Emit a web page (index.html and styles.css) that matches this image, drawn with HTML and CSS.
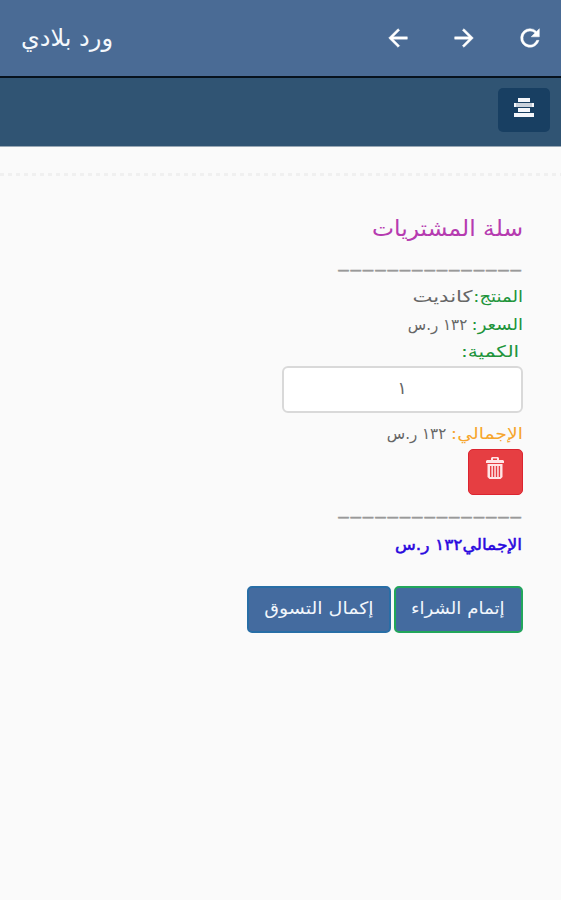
FILE: index.html
```html
<!DOCTYPE html>
<html lang="ar" dir="rtl">
<head>
<meta charset="utf-8">
<title>ورد بلادي</title>
<link rel="stylesheet" href="styles.css">
</head>
<body>
<header class="appbar">
  <div class="actions">
    <svg class="icon" viewBox="0 0 24 24"><path d="M17.65 6.35A7.96 7.96 0 0 0 12 4a8 8 0 1 0 7.73 10h-2.08A6 6 0 1 1 12 6c1.66 0 3.14.69 4.22 1.78L13 11h7V4z"/></svg>
    <svg class="icon" viewBox="0 0 24 24"><path d="M12 4l-1.41 1.41L16.17 11H4v2h12.17l-5.58 5.59L12 20l8-8z"/></svg>
    <svg class="icon" viewBox="0 0 24 24"><path d="M20 11H7.83l5.59-5.59L12 4l-8 8 8 8 1.41-1.41L7.83 13H20z"/></svg>
  </div>
  <h1 class="brand">ورد بلادي</h1>
</header>
<nav class="navbar">
  <button class="menu" aria-label="القائمة"><svg viewBox="0 0 20 20"><path d="M4 0h12v4H4zM0 5h20v4H0zM4 10h12v4H4zM0 15h20v4H0z"/><path class="shade" d="M2 5h16v4H2z"/></svg></button>
</nav>
<div class="divider"></div>
<main class="cart">
  <h2 class="title"><span>سلة المشتريات</span></h2>
  <div class="rule">_______________</div>
  <p class="line product"><b>المنتج:</b><span>كانديت</span></p>
  <p class="line price"><b>السعر:</b> <span>١٣٢ ر.س</span></p>
  <p class="line qty"><b>الكمية:</b></p>
  <div class="field">١</div>
  <p class="line subtotal"><b>الإجمالي:</b> <span>١٣٢ ر.س</span></p>
  <button class="trash" aria-label="حذف"><svg viewBox="0 0 18 22"><path fill-rule="evenodd" d="M6 0h6l1 1v2h4l1 1v2H0V4l1-1h4V1zM7 1.5V3h4V1.5zM1.5 7h15v13l-2 2h-11l-2-2zM4 9v11h1.4V9zm2.9 0v11h1.4V9zm2.9 0v11h1.4V9zm2.9 0v11h1.4V9z"/></svg></button>
  <div class="rule second">_______________</div>
  <p class="line total"><span>الإجمالي١٣٢ ر.س</span></p>
  <div class="buttons">
    <button class="btn checkout"><span>إتمام الشراء</span></button>
    <button class="btn shop"><span>إكمال التسوق</span></button>
  </div>
</main>
</body>
</html>
```
FILE: styles.css
```css
* { box-sizing: border-box; }
body { margin: 0; height: 900px; background: #fafafa; color: #666; font-family: "DejaVu Sans", sans-serif; }
h1, h2, p { margin: 0; font-weight: 400; }
button { border: 0; padding: 0; font-family: inherit; }
.appbar { height: 78px; display: flex; justify-content: space-between; align-items: center; padding: 0 17px 1px 21px; background: #4a6b95; border-bottom: 2px solid #07121d; }
.actions { display: flex; gap: 38px; }
.icon { width: 28px; height: 28px; fill: #fff; stroke: #fff; stroke-width: .4; }
.brand { color: #f4f8fc; font-size: 24px; line-height: 40px; white-space: nowrap; }
.navbar { height: 69px; padding: 10px 11px 0; background: #305473; border-bottom: 1px solid #99a8b5; }
.menu { display: flex; justify-content: center; width: 52px; height: 44px; padding-top: 10px; border-radius: 5px; background: #183f62; }
.menu svg { width: 20px; height: 20px; fill: #f4f6fa; }
.menu .shade { fill: #c9d1db; }
.divider { height: 3px; margin-top: 26px; background: repeating-linear-gradient(90deg, #f0f0f0 0 4px, #fafafa 4px 8px); }
.cart { padding: 36px 38.5px 0 0; }
.title { height: 34px; line-height: 34px; font-size: 22px; color: #b63bb0; }
.rule { height: 37px; width: 184px; font: 18px/30px "Liberation Sans", sans-serif; letter-spacing: 2.3px; color: #999; -webkit-text-stroke: .5px #999; direction: ltr; white-space: nowrap; }
.line { display: flex; gap: 4px; height: 27.5px; line-height: 27.5px; font-size: 16px; white-space: nowrap; }
.line b { font-weight: 400; color: #20943a; }
.line span, .line b, .title span, .btn span { display: inline-block; transform-origin: right center; }
.product { gap: 0; }
.product b { width: 50px; transform: scaleX(1.13); }
.product span { transform: scaleX(1.32); }
.price b { width: 51px; transform: scaleX(1.13); }
.price span, .subtotal span { transform: scaleX(.94); }
.qty { padding-right: 3px; }
.qty b { transform: scaleX(1.26); }
.title span { transform: scaleX(1.063); }
.field { width: 241px; height: 47px; border: 2px solid #d9d9d9; border-radius: 6px; background: #fff; text-align: center; font-size: 17px; line-height: 41px; }
.subtotal { margin-top: 7px; }
.subtotal b { width: 72px; color: #f6a62d; transform: scaleX(1.18); }
.trash { display: flex; justify-content: center; width: 55px; height: 46px; margin-top: 1.5px; padding-top: 7px; border-radius: 5px; background: #e63e42; border: 1px solid #dc2430; }
.trash svg { width: 18px; height: 22px; fill: #ffe5e5; }
.second { height: 36px; line-height: 26px; }
.total { color: #2908de; -webkit-text-stroke: .5px; }
.total span { transform: scaleX(1.067); }
.buttons { display: flex; gap: 3px; margin-top: 28px; }
.btn { height: 47px; border: 2px solid #286ea6; border-radius: 5px; background: #446b9f; color: #f1f6fc; font-size: 17px; line-height: 40px; white-space: nowrap; display: flex; justify-content: center; }
.btn span { transform-origin: center; transform: scaleX(1.12); }
.checkout { width: 129px; border-color: #22a65b; }
.checkout span { transform: scaleX(1.07); }
.shop { width: 144px; }
```
